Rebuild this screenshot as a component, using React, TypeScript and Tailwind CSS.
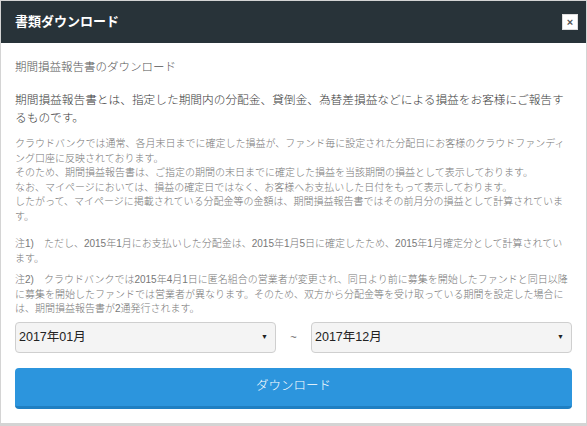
const FONT = { fontFamily: '"Liberation Sans", "Noto Sans CJK JP", sans-serif' };

function MonthSelect({ value }: { value: string }) {
	return (
		<div className="flex h-[31px] flex-1 items-center justify-between rounded-[4px] border border-[#cfcfcf] bg-[#f4f4f4] pr-[7px] pl-[3px] text-[12.5px] text-[#222]">
			<span>{value}</span>
			<span className="text-[7px] text-[#222]">▼</span>
		</div>
	);
}

export default function App() {
	return (
		<div
			className="flex h-[426px] w-[587px] flex-col border-x border-b-[3px] border-t border-[#d4d4d4] bg-white"
			style={FONT}
		>
			{/* Header */}
			<div className="flex h-[42px] shrink-0 items-center justify-between bg-[#283339] pr-[8px] pl-[14px]">
				<h1 className="text-[13px] font-bold text-white">書類ダウンロード</h1>
				<button
					type="button"
					className="flex size-[16px] items-center justify-center border border-[#ddd] bg-white text-[11px] leading-none font-bold text-[#555]"
				>
					×
				</button>
			</div>

			{/* Body */}
			<div className="flex flex-1 flex-col px-[14px] pt-[15px]">
				<h2 className="text-[11.5px] leading-[18px] font-light text-[#555]">
					期間損益報告書のダウンロード
				</h2>
				<p className="mt-[15px] text-[11.7px] leading-[18px] font-light text-[#3a3a3a]">
					期間損益報告書とは、指定した期間内の分配金、貸倒金、為替差損益などによる損益をお客様にご報告するものです。
				</p>
				<p className="mt-[10px] text-[10px] leading-[14.5px] font-light text-[#777]">
					クラウドバンクでは通常、各月末日までに確定した損益が、ファンド毎に設定された分配日にお客様のクラウドファンディング口座に反映されております。
					<br />
					そのため、期間損益報告書は、ご指定の期間の末日までに確定した損益を当該期間の損益として表示しております。
					<br />
					なお、マイページにおいては、損益の確定日ではなく、お客様へお支払いした日付をもって表示しております。
					<br />
					したがって、マイページに掲載されている分配金等の金額は、期間損益報告書ではその前月分の損益として計算されています。
				</p>
				<p className="mt-[13px] text-[10px] leading-[14.5px] font-light text-[#777]">
					注1)　ただし、2015年1月にお支払いした分配金は、2015年1月5日に確定したため、2015年1月確定分として計算されています。
				</p>
				<p className="mt-[7px] text-[10px] leading-[14.5px] font-light text-[#777]">
					注2)　クラウドバンクでは2015年4月1日に匿名組合の営業者が変更され、同日より前に募集を開始したファンドと同日以降に募集を開始したファンドでは営業者が異なります。そのため、双方から分配金等を受け取っている期間を設定した場合には、期間損益報告書が2通発行されます。
				</p>

				<div className="mt-[5px] flex items-center">
					<MonthSelect value="2017年01月" />
					<span className="w-[35px] text-center text-[11px] text-[#666]">~</span>
					<MonthSelect value="2017年12月" />
				</div>

				<button
					type="button"
					className="mt-[15px] flex h-[41px] items-center justify-center rounded-[4px] border-b-[3px] border-[#1f7fc2] bg-[#2c95dd] text-[12.5px] font-light text-white"
				>
					ダウンロード
				</button>
			</div>
		</div>
	);
}
